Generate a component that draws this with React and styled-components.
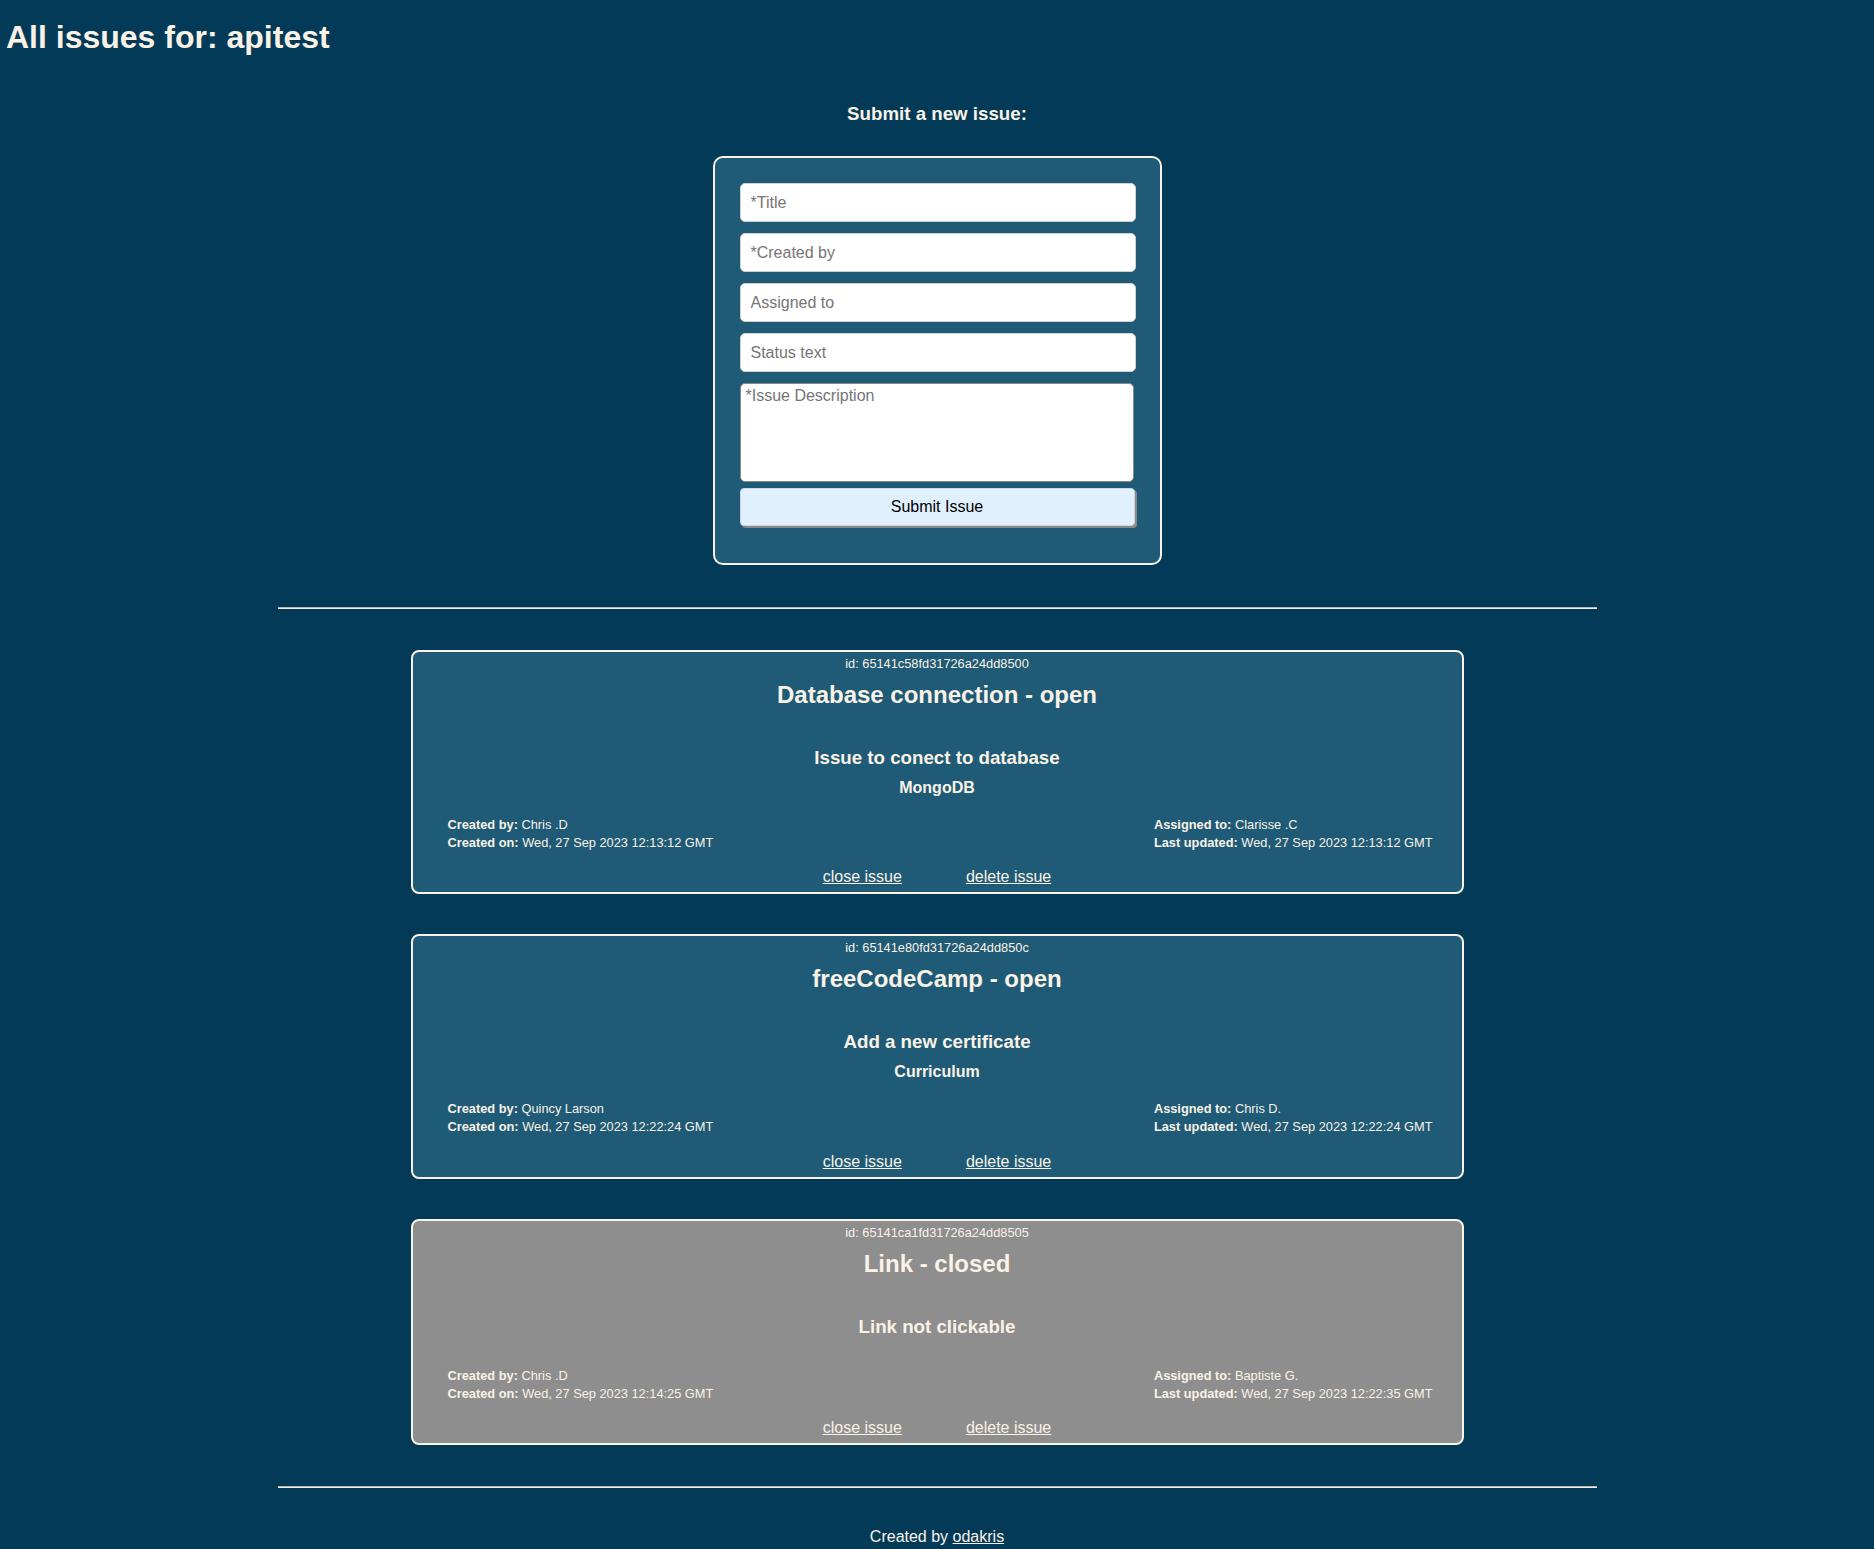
import React from 'react';
import styled, { createGlobalStyle } from 'styled-components';

const issues = [
  {
    _id: '65141c58fd31726a24dd8500',
    issue_title: 'Database connection',
    issue_text: 'Issue to conect to database',
    status_text: 'MongoDB',
    created_by: 'Chris .D',
    assigned_to: 'Clarisse .C',
    created_on: 'Wed, 27 Sep 2023 12:13:12 GMT',
    updated_on: 'Wed, 27 Sep 2023 12:13:12 GMT',
    open: true,
  },
  {
    _id: '65141e80fd31726a24dd850c',
    issue_title: 'freeCodeCamp',
    issue_text: 'Add a new certificate',
    status_text: 'Curriculum',
    created_by: 'Quincy Larson',
    assigned_to: 'Chris D.',
    created_on: 'Wed, 27 Sep 2023 12:22:24 GMT',
    updated_on: 'Wed, 27 Sep 2023 12:22:24 GMT',
    open: true,
  },
  {
    _id: '65141ca1fd31726a24dd8505',
    issue_title: 'Link',
    issue_text: 'Link not clickable',
    status_text: '',
    created_by: 'Chris .D',
    assigned_to: 'Baptiste G.',
    created_on: 'Wed, 27 Sep 2023 12:14:25 GMT',
    updated_on: 'Wed, 27 Sep 2023 12:22:35 GMT',
    open: false,
  },
];

export default function App() {
  return (
    <>
      <GlobalStyle />
      <Page>
        <Heading>All issues for: apitest</Heading>
        <SubHeading>Submit a new issue:</SubHeading>
        <FormBox>
          <Field type="text" placeholder="*Title" />
          <Field type="text" placeholder="*Created by" />
          <Field type="text" placeholder="Assigned to" />
          <Field type="text" placeholder="Status text" />
          <Description placeholder="*Issue Description" />
          <SubmitButton type="button">Submit Issue</SubmitButton>
        </FormBox>
        <Rule $top={42} />
        <IssueList>
          {issues.map((issue) => (
            <IssueCard key={issue._id} $open={issue.open}>
              <IssueId>id: {issue._id}</IssueId>
              <IssueTitle>
                {issue.issue_title} - {issue.open ? 'open' : 'closed'}
              </IssueTitle>
              <IssueText>{issue.issue_text}</IssueText>
              <StatusText>{issue.status_text}</StatusText>
              <Meta>
                <MetaColumn>
                  <div>
                    <b>Created by:</b> {issue.created_by}
                  </div>
                  <div>
                    <b>Created on:</b> {issue.created_on}
                  </div>
                </MetaColumn>
                <MetaColumn>
                  <div>
                    <b>Assigned to:</b> {issue.assigned_to}
                  </div>
                  <div>
                    <b>Last updated:</b> {issue.updated_on}
                  </div>
                </MetaColumn>
              </Meta>
              <Actions>
                <ActionLink href="#">close issue</ActionLink>
                <ActionLink href="#">delete issue</ActionLink>
              </Actions>
            </IssueCard>
          ))}
        </IssueList>
        <Rule $top={41} />
        <Footer>
          Created by <FooterLink href="#">odakris</FooterLink>
        </Footer>
      </Page>
    </>
  );
}

const GlobalStyle = createGlobalStyle`
  html, body {
    margin: 0;
    padding: 0;
    background: #033a57;
  }
  body {
    font-family: "Liberation Sans", Arial, sans-serif;
    color: #faf2e6;
  }
  * {
    box-sizing: border-box;
  }
`;

const Page = styled.div`
  display: flex;
  flex-direction: column;
  align-items: center;
  min-height: 1549px;
  background: #033a57;
  padding-bottom: 40px;
`;

const Heading = styled.h1`
  align-self: stretch;
  margin: 0;
  padding: 19px 0 0 6px;
  font-size: 32px;
  line-height: 37px;
  font-weight: bold;
`;

const SubHeading = styled.h3`
  margin: 47px 0 0;
  font-size: 18.72px;
  line-height: 22px;
  font-weight: bold;
`;

const FormBox = styled.form`
  display: flex;
  flex-direction: column;
  width: 449px;
  margin-top: 31px;
  padding: 25px 24px 37px 25px;
  background: #1f5a76;
  border: 2px solid #faf2e6;
  border-radius: 10px;
`;

const Field = styled.input`
  width: 100%;
  height: 39px;
  margin: 0 0 11px;
  padding: 0 10px;
  font-family: inherit;
  font-size: 16px;
  color: #222;
  background: #fff;
  border: 1px solid #d0d0d0;
  border-radius: 5px;
  outline: none;

  &::placeholder {
    color: #757575;
  }
`;

const Description = styled.textarea`
  width: calc(100% - 2px);
  height: 99px;
  margin: 0 0 6px;
  padding: 3px 5px;
  font-family: inherit;
  font-size: 16px;
  color: #222;
  background: #fff;
  border: 1px solid #8a8a8a;
  border-radius: 5px;
  resize: none;
  outline: none;

  &::placeholder {
    color: #757575;
  }
`;

const SubmitButton = styled.button`
  width: calc(100% - 1px);
  height: 38px;
  padding: 0;
  font-family: inherit;
  font-size: 16px;
  color: #000;
  background: #e1f0ff;
  border: 1px solid #c9d6e2;
  border-radius: 4px;
  box-shadow: 2px 2px 0 #8a8a8a;
  cursor: pointer;
`;

const Rule = styled.hr`
  width: 1319px;
  height: 0;
  margin: ${(p) => p.$top}px 0 0;
  border: none;
  border-top: 1px solid #b9b9b9;
  border-bottom: 1px solid #f3ede4;
`;

const IssueList = styled.div`
  display: flex;
  flex-direction: column;
  gap: 40px;
  margin-top: 41px;
`;

const IssueCard = styled.div`
  display: flex;
  flex-direction: column;
  width: 1053px;
  padding: 4px 0 6px;
  text-align: center;
  background: ${(p) => (p.$open ? '#1f5a76' : '#8e8e8e')};
  border: 2px solid #faf2e6;
  border-radius: 8px;
`;

const IssueId = styled.div`
  font-size: 12.8px;
  line-height: 15px;
`;

const IssueTitle = styled.h2`
  margin: 10px 0 0;
  font-size: 24px;
  line-height: 28px;
  font-weight: bold;
`;

const IssueText = styled.h3`
  margin: 38px 0 0;
  font-size: 18.72px;
  line-height: 22px;
  font-weight: bold;
`;

const StatusText = styled.div`
  margin-top: 10px;
  font-size: 16px;
  line-height: 18px;
  font-weight: bold;
`;

const Meta = styled.div`
  display: flex;
  justify-content: space-between;
  margin-top: 19px;
  padding: 0 29px 0 35px;
  font-size: 12.8px;
  line-height: 17.7px;
  text-align: left;
`;

const MetaColumn = styled.div`
  display: flex;
  flex-direction: column;
`;

const Actions = styled.div`
  display: flex;
  justify-content: center;
  gap: 64px;
  margin-top: 17px;
  font-size: 16px;
  line-height: 18px;
`;

const ActionLink = styled.a`
  color: #faf2e6;
  text-decoration: underline;
`;

const Footer = styled.p`
  margin: 40px 0 0;
  font-size: 16px;
  line-height: 18px;
`;

const FooterLink = styled.a`
  color: #faf2e6;
  text-decoration: underline;
`;
